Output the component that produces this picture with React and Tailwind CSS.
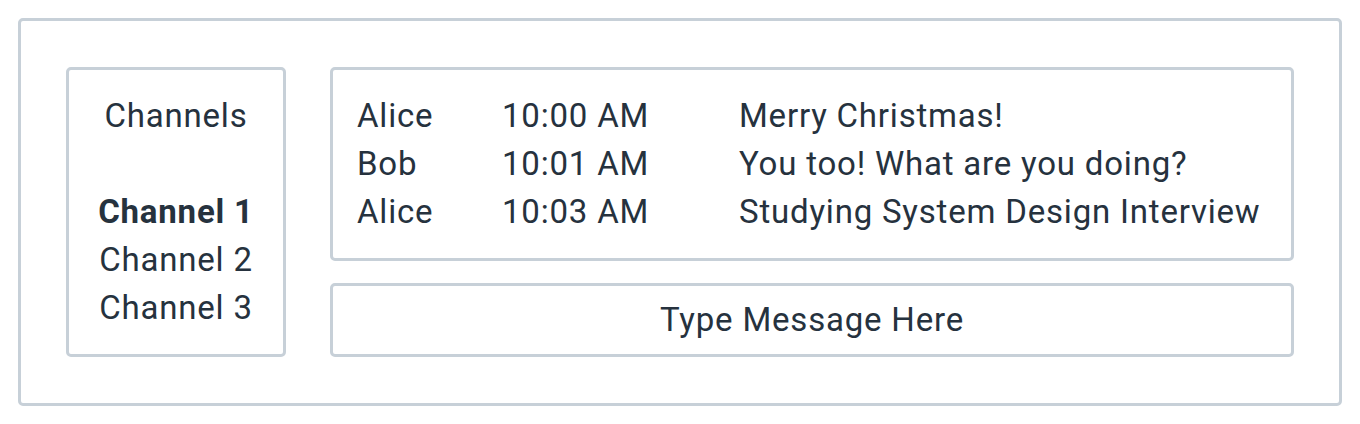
import React from 'react';

const messages = [
    { user: "Alice", time: "10:00 AM", text: "Merry Christmas!" },
    { user: "Bob", time: "10:01 AM", text: "You too! What are you doing?" },
    { user: "Alice", time: "10:03 AM", text: "Studying System Design Interview" },
];

const App = () => {
    return (
        <div className="w-[1360px] h-[424px] bg-white p-[18px] text-[#26323e] text-[33px] tracking-[0.8px] leading-[48px]" style={{ fontFamily: 'Roboto, sans-serif' }}>
            <div className="h-[388px] w-[1324px] border-[3px] border-[#c7d0d8] rounded-[5px] pt-[46px] pb-[44px] px-[45px] flex gap-[44px]">
                {/* Channel list */}
                <div className="w-[220px] h-[290px] shrink-0 border-[3px] border-[#c7d0d8] rounded-[5px] pt-[22px] text-center">
                    <div>Channels</div>
                    <div className="h-[48px]"></div>
                    <div className="font-bold">Channel 1</div>
                    <div>Channel 2</div>
                    <div>Channel 3</div>
                </div>

                {/* Messages + input */}
                <div className="flex-1 flex flex-col gap-[22px]">
                    <div className="h-[194px] border-[3px] border-[#c7d0d8] rounded-[5px] pt-[22px] pl-[24px]">
                        {messages.map((m, i) => (
                            <div key={i} className="grid grid-cols-[145px_237px_1fr] whitespace-nowrap">
                                <span>{m.user}</span>
                                <span>{m.time}</span>
                                <span>{m.text}</span>
                            </div>
                        ))}
                    </div>
                    <div className="h-[74px] border-[3px] border-[#c7d0d8] rounded-[5px] flex items-center justify-center">
                        Type Message Here
                    </div>
                </div>
            </div>
        </div>
    );
};

export default App;
